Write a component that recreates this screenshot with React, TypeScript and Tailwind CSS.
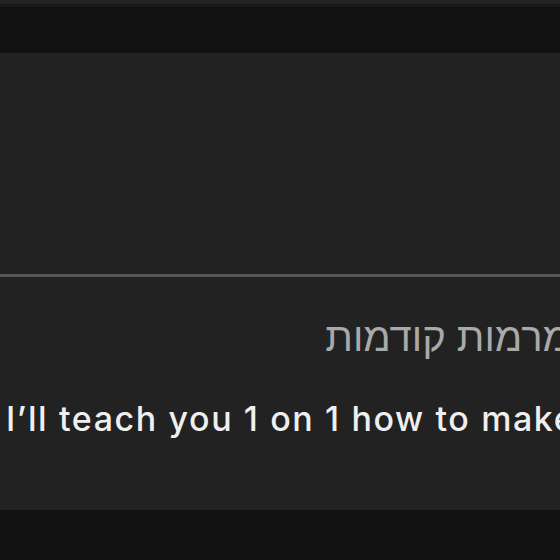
import React from "react";

const App = () => {
  return (
    <div className="w-[560px] h-[560px] overflow-hidden bg-[#111111] flex flex-col font-['Liberation_Sans',sans-serif]">
      <div className="h-[4px] bg-[#222222]" />
      <div className="h-[3px] bg-[#181818]" />
      <div className="h-[46px] bg-[#111111]" />
      <div className="h-[457px] bg-[#222222] flex flex-col">
        <div className="h-[221px]" />
        <div className="h-[3px] bg-[#575757]" />
        <div className="flex justify-end pt-[40px] mr-[-10px]">
          <div dir="rtl" className="whitespace-nowrap text-[40px] leading-[40px] text-[#a9a9a9]">
            מרמות קודמות
          </div>
        </div>
        <div className="pt-[42px] pl-[6px] whitespace-nowrap font-['Inter',sans-serif] font-medium text-[34px] tracking-[1.6px] leading-[40px] text-[#efefef]">
          I’ll teach you 1 on 1 how to make money
        </div>
      </div>
      <div className="flex-1 bg-[#111111]" />
    </div>
  );
};

export default App;
